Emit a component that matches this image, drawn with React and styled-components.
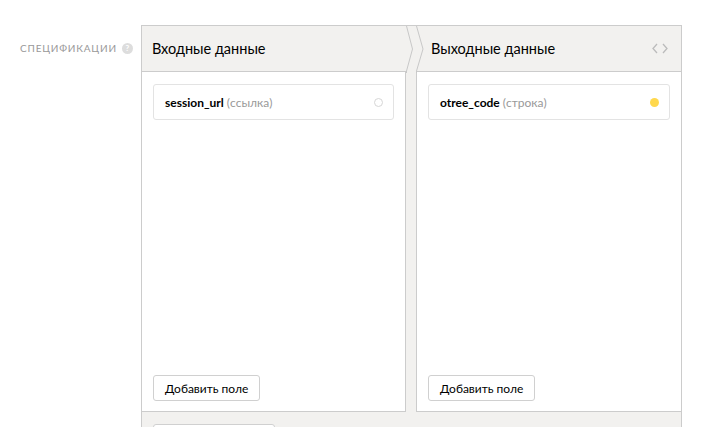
import styled, { createGlobalStyle } from "styled-components";

const GlobalStyle = createGlobalStyle`
  html, body {
    margin: 0;
    padding: 0;
    overflow: hidden;
    background: #fff;
    font-family: Lato, "Open Sans", sans-serif;
    color: #000;
  }
`;

const Page = styled.div`
  display: flex;
  align-items: flex-start;
  padding-top: 25px;
  width: 701px;
`;

const Label = styled.div`
  width: 141px;
  box-sizing: border-box;
  padding: 17px 0 0 20px;
  display: flex;
  align-items: center;
  gap: 5px;
  font-size: 10px;
  letter-spacing: 0.8px;
  color: #999;
  text-transform: uppercase;
`;

const Help = styled.span`
  width: 11px;
  height: 11px;
  border-radius: 50%;
  background: #ddd;
  color: #fff;
  font-size: 8px;
  font-weight: bold;
  letter-spacing: 0;
  display: inline-flex;
  align-items: center;
  justify-content: center;
`;

const Editor = styled.div`
  width: 539px;
  border: 1px solid #ccc;
  border-bottom: none;
  background: #f2f1ef;
`;

const Panels = styled.div`
  display: flex;
`;

const Column = styled.div`
  display: flex;
  flex-direction: column;
  width: ${({ $width }) => $width}px;
`;

const Header = styled.div`
  height: 46px;
  box-sizing: border-box;
  display: flex;
  align-items: center;
  justify-content: space-between;
  padding: 0 13px 0 ${({ $pad }) => $pad}px;
  border-bottom: 1px solid #ccc;
  font-size: 14.5px;
`;

const Body = styled.div`
  height: 340px;
  box-sizing: border-box;
  background: #fff;
  border-bottom: 1px solid #ccc;
  ${({ $side }) => `border-${$side}: 1px solid #ccc;`}
  padding: 12px 11px 10px;
  display: flex;
  flex-direction: column;
  justify-content: space-between;
  align-items: flex-start;
`;

const Divider = styled.div`
  width: 10px;
  height: 47px;
  flex-shrink: 0;
  position: relative;
  z-index: 1;

  svg {
    overflow: visible;
    display: block;
  }
`;

const Card = styled.div`
  align-self: stretch;
  height: 36px;
  box-sizing: border-box;
  border: 1px solid #e3e3e3;
  border-radius: 3px;
  display: flex;
  align-items: center;
  justify-content: space-between;
  padding: 0 10px 0 11px;
  font-size: 12px;
`;

const Name = styled.span`
  font-weight: bold;
`;

const Type = styled.span`
  color: #999;
`;

const Dot = styled.span`
  width: ${({ $filled }) => ($filled ? 9 : 7)}px;
  height: ${({ $filled }) => ($filled ? 9 : 7)}px;
  border-radius: 50%;
  background: ${({ $filled }) => ($filled ? "#ffd84d" : "#fff")};
  border: ${({ $filled }) => ($filled ? "none" : "1px solid #d6d6d6")};
`;

const Button = styled.button`
  height: 26px;
  padding: 0 11px;
  border: 1px solid #d0d0d0;
  border-radius: 3px;
  background: #fff;
  font-family: inherit;
  font-size: 12px;
  color: #000;
`;

const Footer = styled.div`
  padding: 12px 11px 20px;
`;

const FooterButton = styled(Button)`
  display: block;
  width: 122px;
`;

const Chevrons = () => (
  <svg width="10" height="47" viewBox="0 0 10 47">
    <g fill="none" stroke="#c8c8c8" strokeWidth="1">
      <polyline points="0.5,0 6.5,23 0.5,45 0.5,47" />
      <polyline points="10.5,0 17,23 10.5,45 10.5,47" />
    </g>
  </svg>
);

const CodeIcon = () => (
  <svg width="16" height="11" viewBox="0 0 16 11">
    <g fill="none" stroke="#bbb" strokeWidth="1.3">
      <polyline points="5,1 1,5.5 5,10" />
      <polyline points="11,1 15,5.5 11,10" />
    </g>
  </svg>
);

export default function App() {
  return (
    <>
      <GlobalStyle />
      <Page>
        <Label>
          Спецификации <Help>?</Help>
        </Label>
        <Editor>
          <Panels>
            <Column $width={264}>
              <Header $pad={10}>Входные данные</Header>
              <Body $side="right">
                <Card>
                  <span>
                    <Name>session_url</Name> <Type>(ссылка)</Type>
                  </span>
                  <Dot />
                </Card>
                <Button type="button">Добавить поле</Button>
              </Body>
            </Column>
            <Divider>
              <Chevrons />
            </Divider>
            <Column $width={265}>
              <Header $pad={15}>
                Выходные данные
                <CodeIcon />
              </Header>
              <Body $side="left">
                <Card>
                  <span>
                    <Name>otree_code</Name> <Type>(строка)</Type>
                  </span>
                  <Dot $filled />
                </Card>
                <Button type="button">Добавить поле</Button>
              </Body>
            </Column>
          </Panels>
          <Footer>
            <FooterButton type="button" aria-label="Ещё" />
          </Footer>
        </Editor>
      </Page>
    </>
  );
}
